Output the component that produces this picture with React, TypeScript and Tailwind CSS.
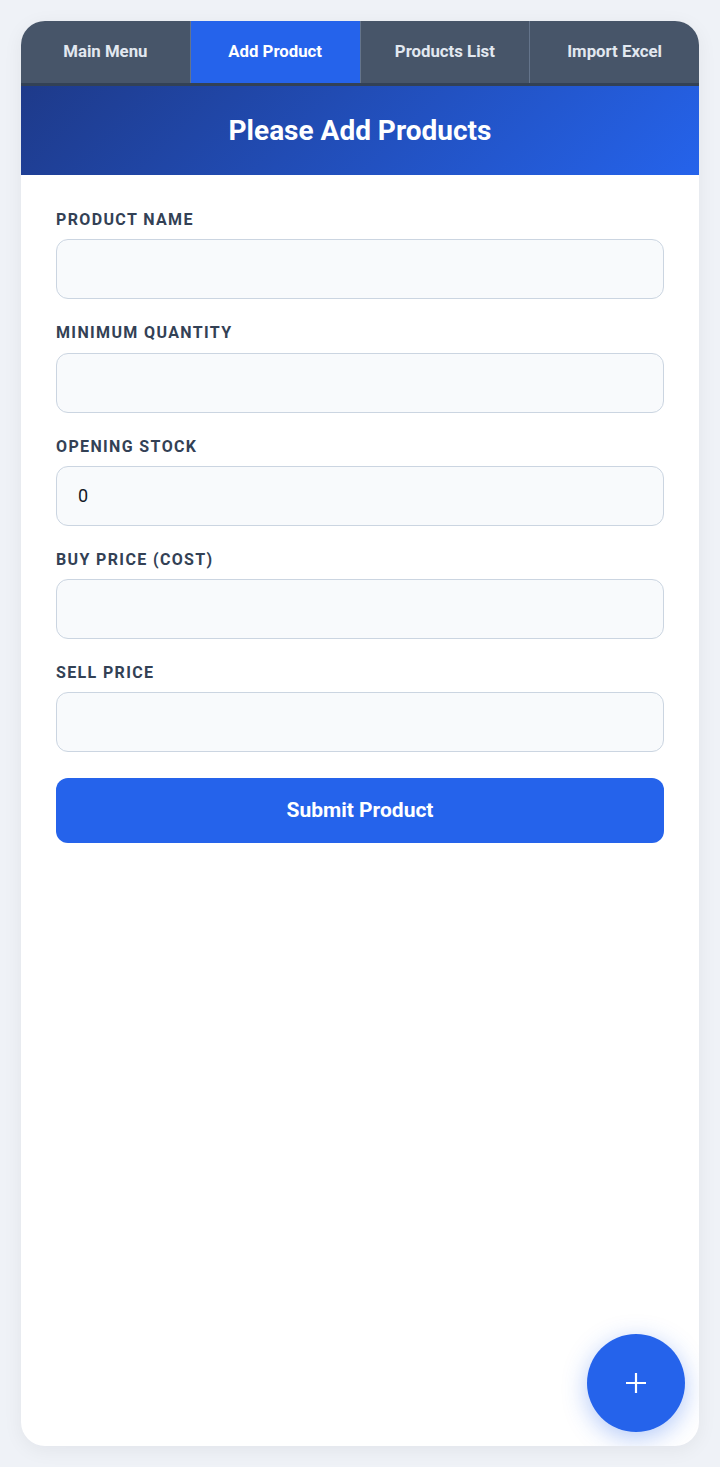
import React from "react";

const tabs = ["Main Menu", "Add Product", "Products List", "Import Excel"];
const fields: { label: string; value?: string }[] = [
  { label: "Product Name" },
  { label: "Minimum Quantity" },
  { label: "Opening Stock", value: "0" },
  { label: "Buy Price (Cost)" },
  { label: "Sell Price" },
];

export default function App() {
  return (
    <div className="min-h-[1467px] bg-[#eff2f7] p-[21px] font-['Roboto',sans-serif]">
      <div className="relative h-[1425px] overflow-hidden rounded-[24px] bg-white shadow-[0_4px_20px_rgba(15,23,42,0.06)]">
        <div className="flex h-[65px] border-b-[3px] border-[#334155] bg-[#475569]">
          {tabs.map((t, i) => (
            <div
              key={t}
              className={
                "flex flex-1 items-center justify-center text-[16.8px] font-bold " +
                (i > 0 ? "border-l border-[#64748b] " : "") +
                (i === 1 ? "bg-[#2563eb] text-white" : "text-[#e2e8f0]")
              }
            >
              {t}
            </div>
          ))}
        </div>
        <div className="flex h-[89px] items-center justify-center bg-[linear-gradient(135deg,#1e3a8a_0%,#2563eb_100%)]">
          <h1 className="text-[28px] font-bold text-white">Please Add Products</h1>
        </div>
        <div className="flex flex-col px-[35px] pt-[34px]">
          {fields.map((f) => (
            <div key={f.label} className="mb-[23px]">
              <label className="mb-[8px] block text-[16px] font-bold uppercase leading-[22.25px] tracking-[0.085em] text-[#334155]">
                {f.label}
              </label>
              <input
                type="text"
                defaultValue={f.value}
                className="box-border h-[60px] w-full rounded-[12px] border border-[#cbd5e1] bg-[#f8fafc] px-[21px] text-[18px] text-[#111827] outline-none"
              />
            </div>
          ))}
          <button className="mt-[3px] flex h-[65px] w-full items-center justify-center rounded-[12px] bg-[#2563eb] text-[21px] font-bold text-white">
            Submit Product
          </button>
        </div>
        <button className="absolute bottom-[14px] right-[14px] flex h-[98px] w-[98px] items-center justify-center rounded-full bg-[#2563eb] shadow-[0_6px_24px_rgba(37,99,235,0.35)]">
          <svg width="22" height="22" viewBox="0 0 22 22">
            <path d="M11 1v20M1 11h20" stroke="white" strokeWidth="2.2" />
          </svg>
        </button>
      </div>
    </div>
  );
}
